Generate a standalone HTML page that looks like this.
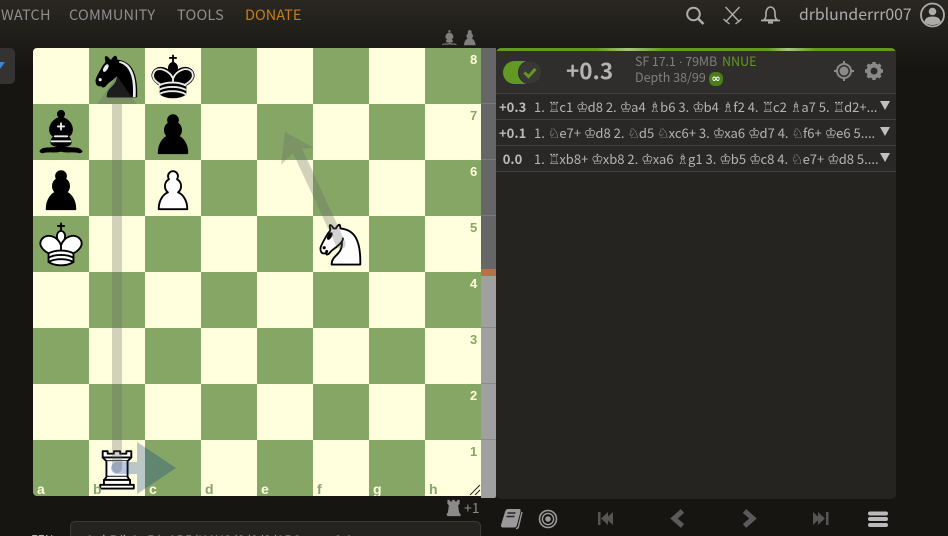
<!DOCTYPE html>
<html><head><meta charset="utf-8">
<style>
html,body{margin:0;padding:0;width:948px;height:536px;overflow:hidden;background:#161512}
body{position:relative;font-family:"Noto Sans CJK JP","Liberation Sans",sans-serif;color:#bababa}
.t{position:absolute;white-space:nowrap;line-height:1}
#bg{position:absolute;left:0;top:0;width:948px;height:70px;background:linear-gradient(#2a2722,#161512)}
.nav{top:8px;font-size:14.5px;color:#8f8f8f;letter-spacing:.2px}
#board{position:absolute;left:33px;top:48px;width:448px;height:448px;background:repeating-conic-gradient(#86a666 0 25%,#ffffdd 0 50%) 0 0/112px 112px;border-radius:4px 0 0 4px;overflow:hidden}
#gauge{position:absolute;left:481px;top:48px;width:15px;height:450px;background:linear-gradient(#666 0 221px,#a0a0a0 221px);border-radius:0 0 2px 0}
#panel{position:absolute;left:496px;top:48px;width:400px;height:451px;background:#262421;border-radius:5px;overflow:hidden}
#head{position:absolute;left:0;top:0;width:400px;height:45px;background:#302e2c;border-bottom:1px solid #404040}
#bar{position:absolute;left:0;top:0;width:400px;height:3px;background:linear-gradient(90deg,#629924 0,#629924 25%,#a5c57a 33%,#629924 42%,#629924 68%,#a5c57a 73%,#629924 80%)}
.row{position:absolute;left:0;width:400px;height:25px;background:#2a2826;border-bottom:1px solid #404040}
.ev{position:absolute;left:3px;width:27px;top:6px;text-align:center;font-size:13px;font-weight:700;color:#bababa;line-height:1;white-space:nowrap}
.mv{position:absolute;left:38px;top:6px;font-size:13px;line-height:1;color:#b4b4b4;white-space:nowrap;letter-spacing:0}
.mv i{font-family:"DejaVu Sans",sans-serif;font-style:normal;font-size:14px;letter-spacing:0;margin-right:-1px}
.tri{position:absolute;left:384px;top:7px;width:0;height:0;border-left:5.5px solid transparent;border-right:5.5px solid transparent;border-top:9px solid #c0c0c0}
.c{position:absolute;font:700 14px/1 "Liberation Sans",sans-serif}
.r{position:absolute;left:437px;font:700 13px/1 "Liberation Sans",sans-serif}
svg{position:absolute;overflow:visible}
</style></head><body>
<div id="bg"></div>
<div class="t nav" style="left:1px">WATCH</div>
<div class="t nav" style="left:69px">COMMUNITY</div>
<div class="t nav" style="left:177px">TOOLS</div>
<div class="t nav" style="left:245px;color:#c67f16;letter-spacing:0">DONATE</div>
<svg style="left:680px;top:0" width="268" height="36" fill="none" stroke="#acacac" stroke-width="2">
<circle cx="13.5" cy="14" r="6.3"/><path d="M18 18.5l5.5 5.5" stroke-width="2.6"/>
<path d="M45.500 7l14 15M59.500 7L45.500 22M43.500 19l6 5M61.500 19l-6 5" stroke-width="1.4"/>
<path d="M84 20c2-2 2-4 2-7 0-4 2.500-6 4.500-6s4.500 2 4.500 6c0 3 0 5 2 7z" stroke-width="1.6"/><path d="M81 20.500h19" stroke-width="1.800"/><path d="M88 22.500h5" stroke-width="2.200"/>
<circle cx="252.500" cy="15" r="11.500" stroke-width="1.800"/>
<circle cx="252.500" cy="11.500" r="3.800" fill="#acacac" stroke="none"/><path d="M244.500 22c0-4 4-5.500 8-5.500s8 1.500 8 5.500c-2 2-5 3-8 3s-6-1-8-3z" fill="#acacac" stroke="none"/>
</svg>
<div class="t" style="left:799px;top:6px;font-size:15.8px;color:#acacac">drblunderrr007</div>

<div style="position:absolute;left:-20px;top:48px;width:35px;height:36px;background:#353331;border-radius:5px"></div>
<div style="position:absolute;left:0;top:62px;width:0;height:0;border-top:7px solid #3b86d0;border-right:5px solid transparent"></div>

<svg style="left:0;top:0" width="948" height="48" fill="#7e7e7e">
<g transform="translate(439.300,27.500) scale(.45)"><path d="M9 36c3.390-.97 10.110.43 13.500-2 3.390 2.430 10.110 1.030 13.500 2 0 0 1.650.54 3 2-.68.970-1.650.99-3 .5-3.390-.97-10.110.46-13.500-1-3.390 1.460-10.110.03-13.500 1-1.354.49-2.323.47-3-.5 1.354-1.940 3-2 3-2z"/><path d="M15 32c2.500 2.500 12.500 2.500 15 0 .5-1.500 0-2 0-2 0-2.500-2.500-4-2.500-4 5.500-1.500 6-11.500-5-15.500-11 4-10.500 14-5 15.500 0 0-2.500 1.500-2.500 4 0 0-.5.5 0 2z"/><circle cx="22.500" cy="8" r="2.500"/></g>
<g transform="translate(458.500,25.500) scale(.5)"><path d="M22.500 9c-2.210 0-4 1.790-4 4 0 .89.29 1.710.78 2.380C17.330 16.500 16 18.590 16 21c0 2.030.94 3.840 2.410 5.030-3 1.060-7.410 5.550-7.410 13.470h23c0-7.920-4.410-12.410-7.410-13.470 1.470-1.190 2.410-3 2.410-5.030 0-2.410-1.330-4.500-3.280-5.620.49-.67.78-1.490.78-2.380 0-2.210-1.790-4-4-4z"/></g>
</svg>

<div id="board">
<svg width="448" height="448" viewBox="0 0 448 448">
<g fill="none" fill-rule="evenodd" stroke="#000" stroke-linecap="round" stroke-linejoin="round" stroke-width="1.5">
<g transform="translate(56,0) scale(1.2444)"><path fill="#000" d="M22 10c10.500 1 16.500 8 16 29H15c0-9 10-6.500 8-21"/><path fill="#000" d="M24 18c.38 2.910-5.550 7.370-8 9-3 2-2.820 4.340-5 4-1.042-.94 1.410-3.040 0-3-1 0 .19 1.230-1 2-1 0-4.003 1-4-4 0-2 6-12 6-12s1.890-1.900 2-3.500c-.73-.994-.5-2-.5-3 1-1 3 2.500 3 2.500h2s.78-1.992 2.500-3c1 0 1 3 1 3"/><path fill="#ececec" stroke="#ececec" d="M9.500 25.500a.5.5 0 1 1-1 0 .5.5 0 1 1 1 0m4.500-8.500a.5 1.500 30 1 1-1-1.730.5 1.500 30 1 1 1 1.730"/><path fill="#ececec" stroke="none" d="M24.550 10.400l-.45 1.450.5.15c3.150 1 5.650 2.490 7.900 6.750S35.750 29.060 35.250 39l-.05.5h2.250l.05-.5c.5-10.060-.88-16.850-3.250-21.340-2.370-4.490-5.790-6.640-9.190-7.160z"/></g>
<g transform="translate(112,0) scale(1.2444)"><path stroke-linejoin="miter" d="M22.500 11.630V6"/><path fill="#000" stroke-linecap="butt" stroke-linejoin="miter" d="M22.500 25s4.500-7.500 3-10.500c0 0-1-2.500-3-2.500s-3 2.500-3 2.500c-1.500 3 3 10.500 3 10.500"/><path fill="#000" d="M12.500 37c5.500 3.500 14.500 3.500 20 0v-7s9-4.500 6-10.500c-4-6.500-13.500-3.500-16 4V27v-3.500c-2.500-7.500-12-10.500-16-4-3 6 6 10.500 6 10.500v7"/><path stroke-linejoin="miter" d="M20 8h5"/><path stroke="#ececec" d="M32 29.500s8.500-4 6.030-9.650C34.150 14 25 18 22.500 24.500l.01 2.100-.01-2.100C20 18 9.906 14 6.997 19.850c-2.497 5.650 4.853 9 4.853 9"/><path stroke="#ececec" d="M11.500 30c5.500-3 15.500-3 21 0m-21 3.500c5.500-3 15.500-3 21 0m-21 3.500c5.500-3 15.500-3 21 0"/></g>
<g transform="translate(0,56) scale(1.2444)"><g fill="#000" stroke-linecap="butt"><path d="M9 36c3.390-.97 10.110.43 13.500-2 3.390 2.430 10.110 1.030 13.500 2 0 0 1.650.54 3 2-.68.970-1.650.99-3 .5-3.390-.97-10.110.46-13.500-1-3.390 1.460-10.110.03-13.500 1-1.354.49-2.323.47-3-.5 1.354-1.940 3-2 3-2z"/><path d="M15 32c2.500 2.500 12.500 2.500 15 0 .5-1.500 0-2 0-2 0-2.500-2.500-4-2.500-4 5.500-1.500 6-11.500-5-15.500-11 4-10.500 14-5 15.500 0 0-2.500 1.500-2.500 4 0 0-.5.5 0 2z"/><path d="M25 8a2.500 2.500 0 1 1-5 0 2.500 2.500 0 1 1 5 0z"/></g><path stroke="#ececec" stroke-linejoin="miter" d="M17.500 26h10M15 30h15m-7.500-14.500v5M20 18h5"/></g>
<path transform="translate(112,56) scale(1.2444)" fill="#000" d="M22.500 9c-2.210 0-4 1.790-4 4 0 .89.29 1.710.78 2.380C17.330 16.500 16 18.590 16 21c0 2.030.94 3.840 2.410 5.030-3 1.060-7.410 5.550-7.410 13.470h23c0-7.920-4.410-12.410-7.410-13.470 1.470-1.190 2.410-3 2.410-5.030 0-2.410-1.330-4.500-3.280-5.620.49-.67.78-1.490.78-2.380 0-2.210-1.790-4-4-4z"/>
<path transform="translate(0,112) scale(1.2444)" fill="#000" d="M22.500 9c-2.210 0-4 1.790-4 4 0 .89.29 1.710.78 2.380C17.330 16.500 16 18.590 16 21c0 2.030.94 3.840 2.410 5.030-3 1.060-7.410 5.550-7.410 13.470h23c0-7.920-4.410-12.410-7.410-13.470 1.470-1.190 2.410-3 2.410-5.030 0-2.410-1.330-4.500-3.280-5.620.49-.67.78-1.490.78-2.380 0-2.210-1.790-4-4-4z"/>
<path transform="translate(112,112) scale(1.2444)" fill="#fff" d="M22.500 9c-2.210 0-4 1.790-4 4 0 .89.29 1.710.78 2.380C17.330 16.500 16 18.590 16 21c0 2.030.94 3.840 2.410 5.030-3 1.060-7.410 5.550-7.410 13.470h23c0-7.920-4.410-12.410-7.410-13.470 1.470-1.190 2.410-3 2.410-5.030 0-2.410-1.330-4.500-3.280-5.620.49-.67.78-1.490.78-2.380 0-2.210-1.790-4-4-4z"/>
<g transform="translate(0,168) scale(1.2444)"><path stroke-linejoin="miter" d="M22.500 11.630V6M20 8h5"/><path fill="#fff" stroke-linecap="butt" stroke-linejoin="miter" d="M22.500 25s4.500-7.500 3-10.500c0 0-1-2.500-3-2.500s-3 2.500-3 2.500c-1.500 3 3 10.500 3 10.500"/><path fill="#fff" d="M12.500 37c5.500 3.500 14.500 3.500 20 0v-7s9-4.500 6-10.500c-4-6.500-13.500-3.500-16 4V27v-3.500c-2.500-7.500-12-10.500-16-4-3 6 6 10.500 6 10.500v7"/><path d="M12.500 30c5.500-3 14.500-3 20 0m-20 3.500c5.500-3 14.500-3 20 0m-20 3.500c5.500-3 14.500-3 20 0"/></g>
<g transform="translate(280,168) scale(1.2444)"><path fill="#fff" d="M22 10c10.500 1 16.500 8 16 29H15c0-9 10-6.500 8-21"/><path fill="#fff" d="M24 18c.38 2.910-5.550 7.370-8 9-3 2-2.820 4.340-5 4-1.042-.94 1.410-3.040 0-3-1 0 .19 1.230-1 2-1 0-4.003 1-4-4 0-2 6-12 6-12s1.890-1.900 2-3.500c-.73-.994-.5-2-.5-3 1-1 3 2.500 3 2.500h2s.78-1.992 2.500-3c1 0 1 3 1 3"/><path fill="#000" d="M9.500 25.500a.5.5 0 1 1-1 0 .5.5 0 1 1 1 0m4.500-8.500a.5 1.500 30 1 1-1-1.730.5 1.500 30 1 1 1 1.730"/></g>
<g transform="translate(56,392) scale(1.2444)" fill="#fff"><path stroke-linecap="butt" d="M9 39h27v-3H9v3zm3-3v-4h21v4H12zm-1-22V9h4v2h5V9h5v2h5V9h4v5"/><path d="M34 14l-3 3H14l-3-3"/><path stroke-linecap="butt" stroke-linejoin="miter" d="M31 17v12.500H14V17"/><path d="M31 29.500l1.500 2.500h-20l1.500-2.500"/><path fill="none" stroke-linejoin="miter" d="M11 14h23"/></g>
</g>
<g fill="#646464" fill-opacity=".29" stroke="none">
<path d="M79 420V56H64L84 28l19.500 28H89v364a5 5 0 0 1-10 0z"/>
<path d="M303.500 198.600 L260 105 L248 117 L252 84 L281 100 L269 100.500 L312.500 194.400 a5 5 0 0 1-9 4.200z"/>
</g>
<path d="M84 414h20v-20l39 26-39 26v-20H84a6 6 0 0 1 0-12z" fill="#003088" fill-opacity=".27"/>
<path d="M437 447l10-10M442 447l5-5" stroke="#222" stroke-width="1" fill="none"/>
</svg>
<span class="c" style="left:4px;top:434px;color:#ffffdd">a</span><span class="c" style="left:60px;top:434px;color:#86a666">b</span><span class="c" style="left:116px;top:434px;color:#ffffdd">c</span><span class="c" style="left:172px;top:434px;color:#86a666">d</span><span class="c" style="left:228px;top:434px;color:#ffffdd">e</span><span class="c" style="left:284px;top:434px;color:#86a666">f</span><span class="c" style="left:340px;top:434px;color:#ffffdd">g</span><span class="c" style="left:396px;top:434px;color:#86a666">h</span>
<span class="r" style="top:5px;color:#ffffdd">8</span><span class="r" style="top:61px;color:#86a666">7</span><span class="r" style="top:117px;color:#ffffdd">6</span><span class="r" style="top:173px;color:#86a666">5</span><span class="r" style="top:229px;color:#ffffdd">4</span><span class="r" style="top:285px;color:#86a666">3</span><span class="r" style="top:341px;color:#ffffdd">2</span><span class="r" style="top:397px;color:#86a666">1</span>
</div>

<div id="gauge">
<svg width="15" height="450">
<path d="M0 55.500h15M0 111.500h15M0 167.500h15" stroke="#7a7a7a" stroke-width="1"/>
<path d="M0 279.500h15M0 335.500h15M0 391.500h15" stroke="#8a8a8a" stroke-width="1"/>
<rect x="0" y="221" width="15" height="7" fill="#b8704a"/>
</svg>
</div>

<div id="panel">
<div id="head"></div>
<div id="bar"></div>
<svg style="left:0;top:0" width="400" height="45">
<rect x="7" y="13" width="38" height="23" rx="11.500" fill="#629924"/>
<circle cx="34" cy="24.500" r="11.500" fill="#3a3836" stroke="#2f2d2b" stroke-width="1"/>
<path d="M28.500 24.500l4 4 7-7.500" fill="none" stroke="#629924" stroke-width="3"/>
<circle cx="348" cy="23" r="7" fill="none" stroke="#8a8a8a" stroke-width="2"/><circle cx="348" cy="23" r="4.500" fill="#8a8a8a"/><path d="M348 13v3M348 30v3M338 23h3M355 23h3" stroke="#8a8a8a" stroke-width="2"/>
<circle cx="378" cy="23" r="5.500" fill="none" stroke="#8a8a8a" stroke-width="4"/>
<path d="M378 14v4M378 28v4M369 23h4M383 23h4M371.600 16.600l3 3M381.400 26.400l3 3M384.400 16.600l-3 3M374.600 26.400l-3 3" stroke="#8a8a8a" stroke-width="3.400"/>
</svg>
<div class="t" style="left:70px;top:11px;font-size:22.5px;font-weight:700;color:#b4b4b4">+0.3</div>
<div class="t" style="left:139px;top:7px;font-size:12.500px;color:#7f7f7f;letter-spacing:-.1px">SF 17.1 <span style="font-family:'Liberation Sans',sans-serif">·</span> 79MB</div>
<div class="t" style="left:226px;top:7px;font-size:12.500px;color:#629924">NNUE</div>
<div class="t" style="left:139px;top:23px;font-size:12.500px;color:#7f7f7f">Depth 38/99</div>
<div style="position:absolute;left:213px;top:24px;width:14px;height:14px;border-radius:6px;background:#4c7d1a;color:#fff;font:700 11px/13px 'DejaVu Sans',sans-serif;text-align:center">∞</div>
<div class="row" style="top:46px"><span class="ev">+0.3</span><span class="mv">1. <i>♖</i>c1 <i>♔</i>d8 2. <i>♔</i>a4 <i>♗</i>b6 3. <i>♔</i>b4 <i>♗</i>f2 4. <i>♖</i>c2 <i>♗</i>a7 5. <i>♖</i>d2+...</span><span class="tri"></span></div>
<div class="row" style="top:72px"><span class="ev">+0.1</span><span class="mv">1. <i>♘</i>e7+ <i>♔</i>d8 2. <i>♘</i>d5 <i>♘</i>xc6+ 3. <i>♔</i>xa6 <i>♔</i>d7 4. <i>♘</i>f6+ <i>♔</i>e6 5....</span><span class="tri"></span></div>
<div class="row" style="top:98px"><span class="ev">0.0</span><span class="mv">1. <i>♖</i>xb8+ <i>♔</i>xb8 2. <i>♔</i>xa6 <i>♗</i>g1 3. <i>♔</i>b5 <i>♔</i>c8 4. <i>♘</i>e7+ <i>♔</i>d8 5....</span><span class="tri"></span></div>
</div>

<svg style="left:443px;top:497px" width="22" height="22" viewBox="0 0 45 45" fill="#8a8a8a"><path d="M9 39h27v-4l-3-3-2-15 3-3V6h-5v3h-5V6h-5v3h-5V6h-5v8l3 3-2 15-3 3z"/></svg>
<div class="t" style="left:464px;top:501px;font-size:14px;color:#8a8a8a">+1</div>

<div style="position:absolute;left:70px;top:521px;width:409px;height:30px;background:#242320;border:1px solid #3c3b38;border-radius:5px"></div>
<div class="t" style="left:31px;top:534px;font-size:12px;color:#b0b0b0">FEN</div>
<div class="t" style="left:86px;top:533px;font-size:13px;color:#b0b0b0;letter-spacing:.4px">1nk5/b1p5/p1P5/K4N2/8/8/8/1R6 w - - 0 1</div>

<svg style="left:496px;top:500px" width="400" height="36" fill="none">
<path d="M9 12c.4-2 1.500-3 3-3h11c1.500 0 1.800 1 1.500 2.500L21 25c-.4 1.500-1.500 2.500-3 2.500H7c-1.500 0-2.200-1-2-2.500z" fill="#9a9a9a"/><path d="M11.500 13h8M10.500 16.500h8" stroke="#262421" stroke-width="1.400"/><path d="M26 12l-3.500 14.500c-.3 1-1 2-2.500 2" stroke="#9a9a9a" stroke-width="1.400"/>
<circle cx="52" cy="19" r="8.500" stroke="#9a9a9a" stroke-width="1.600"/><circle cx="52" cy="19" r="5.600" stroke="#9a9a9a" stroke-width="1.400"/><circle cx="52" cy="19" r="2.800" fill="#9a9a9a"/>
<path d="M102 12v13h2.500V12zM112 12v13l-7-6.500zM117 12v13l-7-6.500z" fill="#555"/>
<path d="M186.500 11L178 18.500 186.500 26" stroke="#5a5a5a" stroke-width="5" stroke-linejoin="miter"/>
<path d="M248.500 11L257 18.500 248.500 26" stroke="#5a5a5a" stroke-width="5" stroke-linejoin="miter"/>
<path d="M317 12v13l7-6.500zM322 12v13l7-6.500zM330 12v13h2.500V12z" fill="#555"/>
<path d="M374 13.500h16M374 19h16M374 25h16" stroke="#bababa" stroke-width="4" stroke-linecap="round"/>
</svg>
</body></html>
